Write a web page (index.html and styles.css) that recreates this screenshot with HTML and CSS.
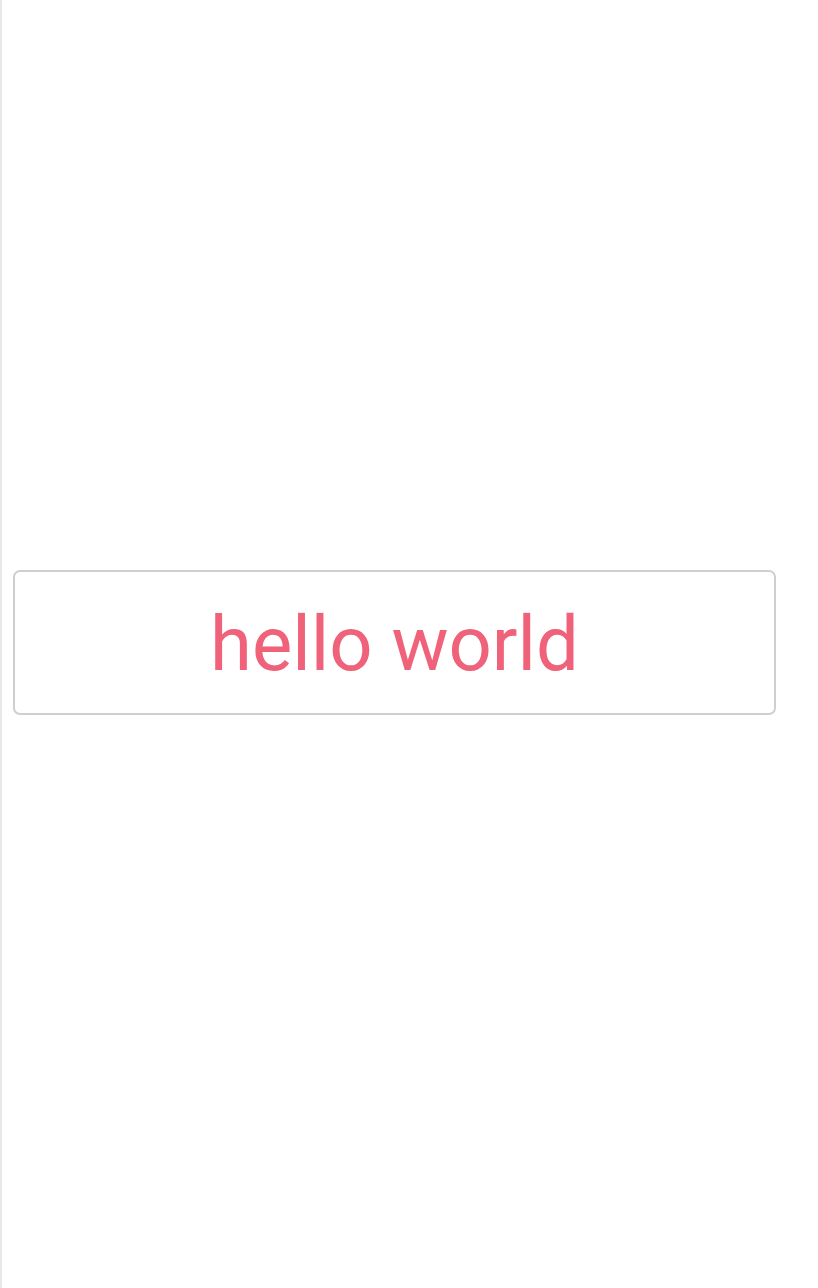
FILE: index.html
```html
<!DOCTYPE html>
<html>
<head>
<meta charset="utf-8">
<link rel="stylesheet" href="styles.css">
</head>
<body>
<div class="page">
  <div class="box">hello world</div>
</div>
</body>
</html>
```
FILE: styles.css
```css
html, body {
  margin: 0;
  padding: 0;
  background: #ffffff;
}
.page {
  box-sizing: border-box;
  height: 1288px;
  border-left: 2px solid #e8e8e8;
  padding: 0 42px 3px 11px;
  display: flex;
  align-items: center;
}
.box {
  box-sizing: border-box;
  flex: 1;
  height: 145px;
  padding-top: 3px;
  border: 2px solid #cfcfcf;
  border-radius: 7px;
  display: flex;
  align-items: center;
  justify-content: center;
  font-family: Roboto, "Liberation Sans", sans-serif;
  font-size: 76px;
  color: #ef627a;
}
```
